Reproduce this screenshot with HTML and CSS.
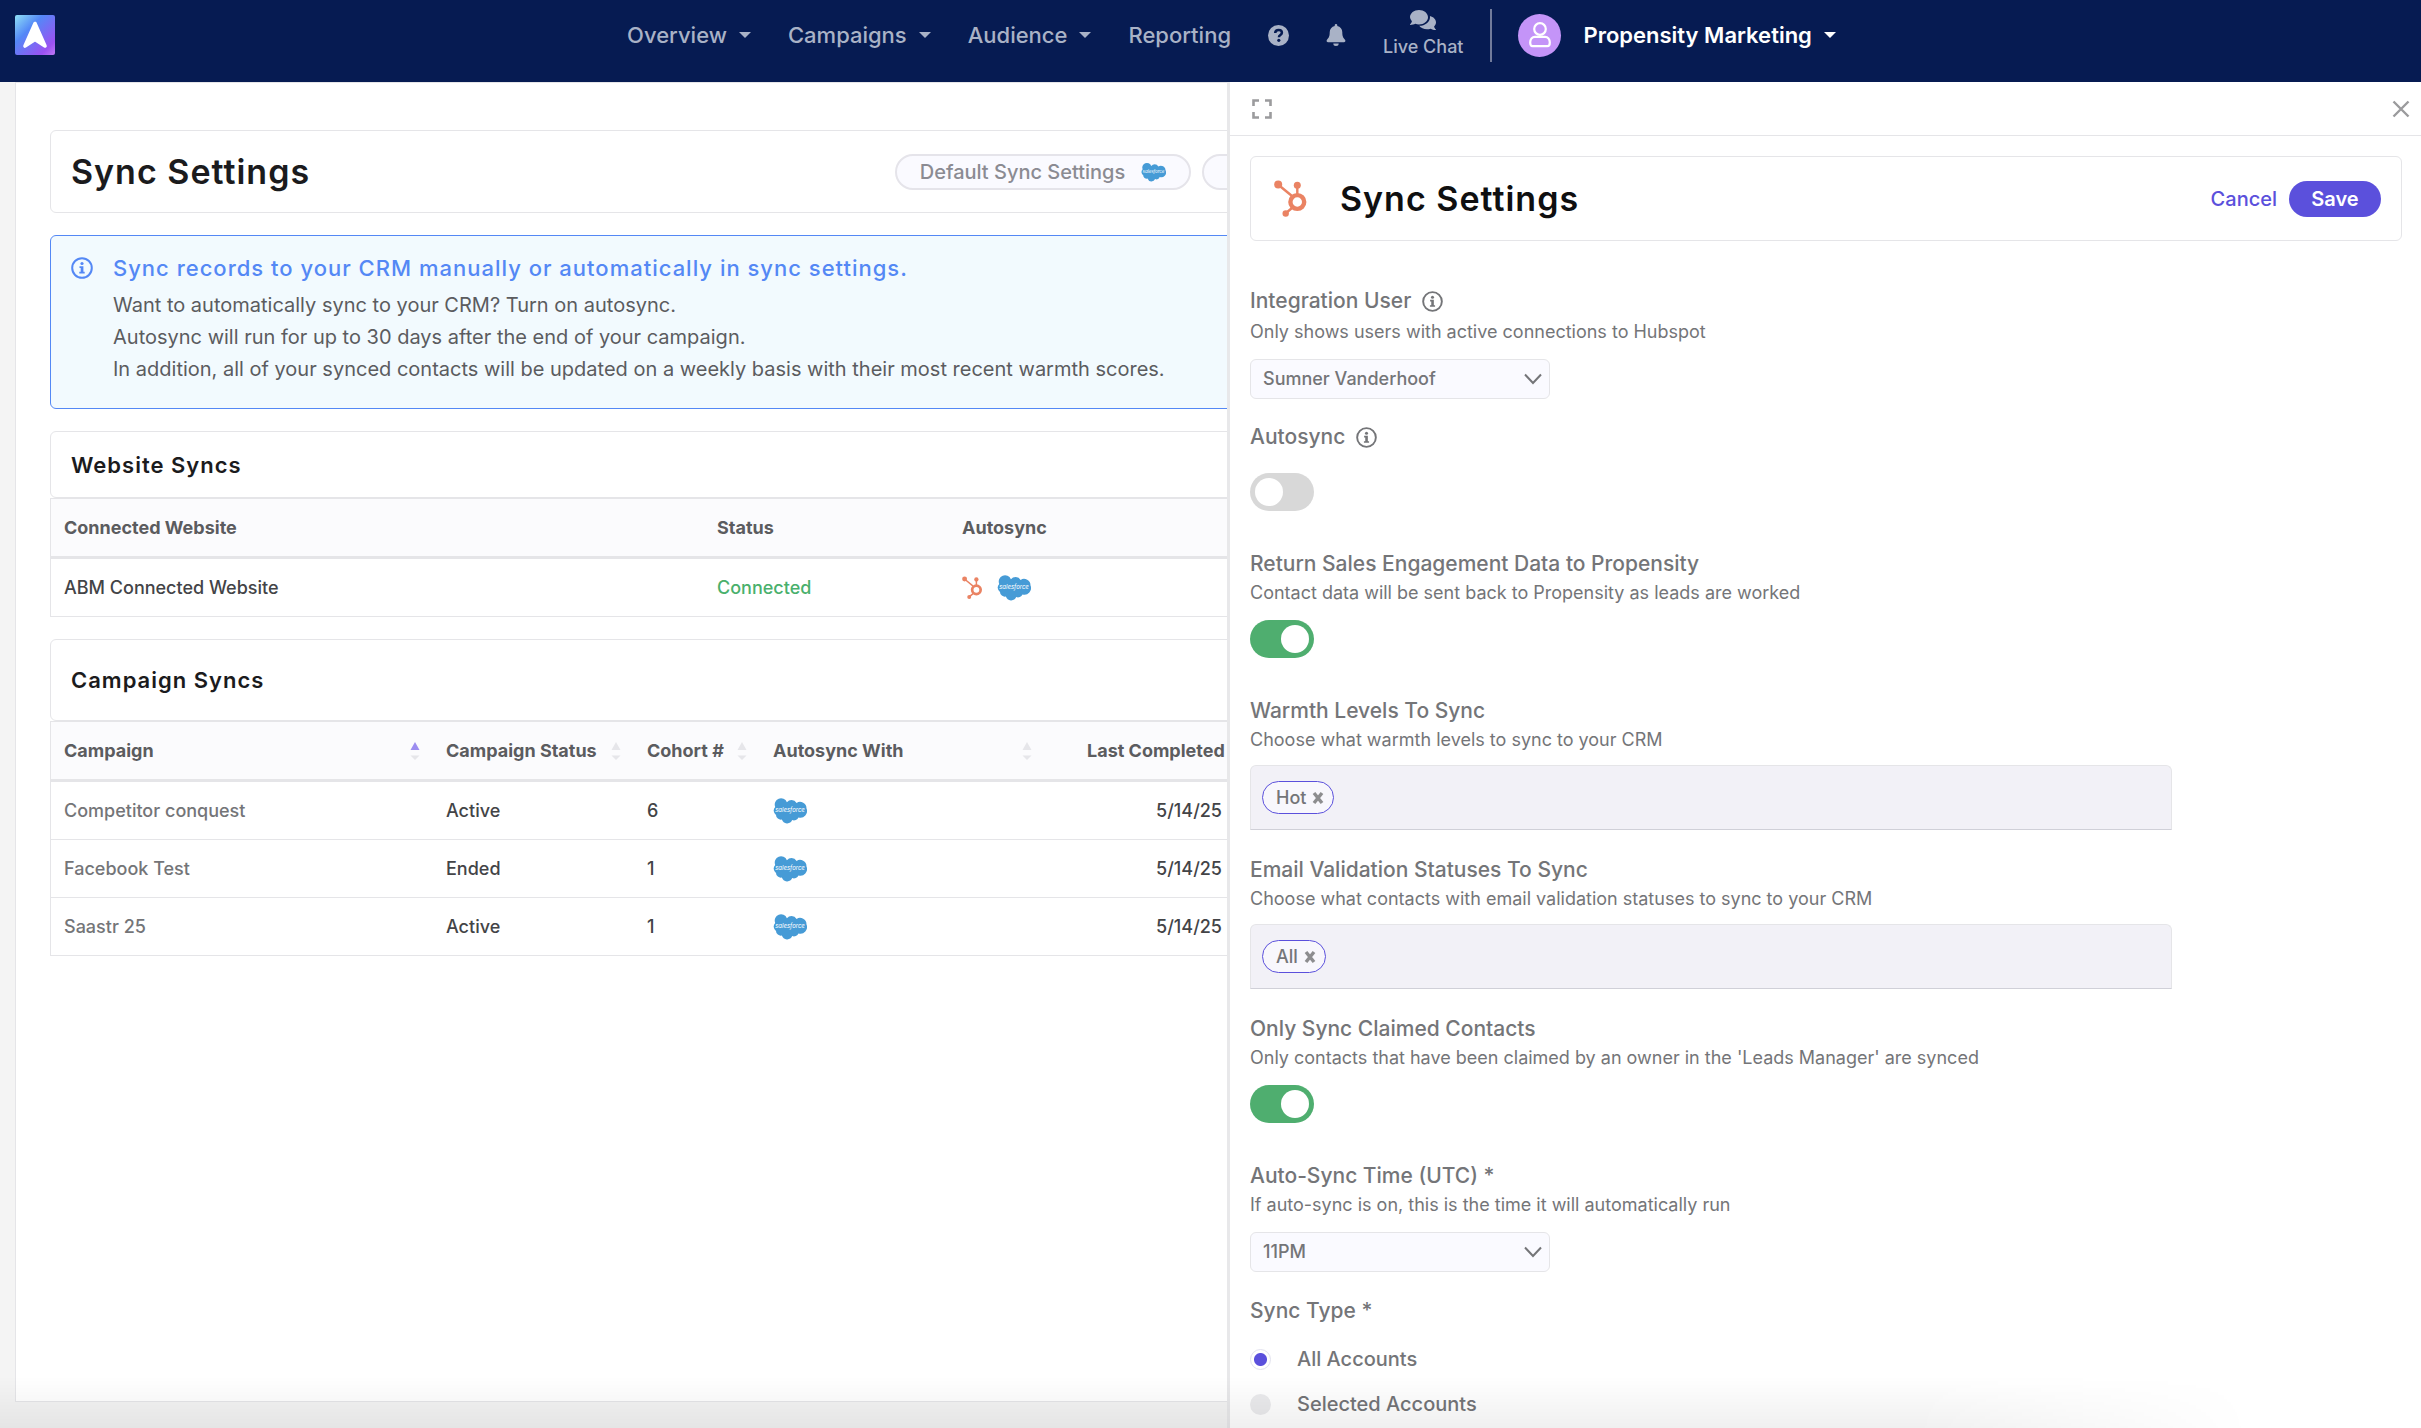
FILE: index.html
```
<!DOCTYPE html>
<html lang="en">
<head>
<meta charset="utf-8">
<title>Sync Settings</title>
<link rel="stylesheet" href="styles.css">
</head>
<body>
<svg class="sprite" aria-hidden="true">
  <symbol id="salesforce" viewBox="0 0 34 27">
    <path fill="#469bd6" d="M13.9 3.2A6.2 6.2 0 0 1 18.600 1a6 6 0 0 1 5 2.900 6.500 6.500 0 0 1 9.900 5.600 6.600 6.600 0 0 1-8 8.900 5 5 0 0 1-6.300 2.700 5.500 5.500 0 0 1-10.300-.600 4.800 4.800 0 0 1-5.900-4.600A5.200 5.200 0 0 1 2.200 7.900 6.300 6.300 0 0 1 13.900 3.200z" transform="translate(0 2)"/>
    <text x="17" y="15" text-anchor="middle" fill="#fff" class="cloud-word">salesforce</text>
  </symbol>
  <symbol id="hubspot" viewBox="0 0 34 38">
    <g fill="none" stroke="#ea8363" stroke-width="2.400">
      <path d="M4 4.500l14 11.500M23.300 6v9M18 28l-6 5"/>
      <circle cx="23.300" cy="22" r="6.900" stroke-width="4.400"/>
    </g>
    <g fill="#ea8363"><circle cx="4.200" cy="4.500" r="4"/><circle cx="23.300" cy="5.200" r="3.500"/><circle cx="11.700" cy="33.500" r="3.200"/></g>
  </symbol>
  <symbol id="info" viewBox="0 0 22 22">
    <circle cx="11" cy="11" r="9.800" fill="none" stroke="currentColor" stroke-width="2"/>
    <circle cx="11" cy="6.500" r="1.600" fill="currentColor"/>
    <path d="M8.500 9.200h3.900v5.600h1.300v1.700H8.300v-1.700h1.400V10.900H8.500z" fill="currentColor"/>
  </symbol>
  <symbol id="chevron" viewBox="0 0 18 12">
    <path d="M1 1.500l8 8.500 8-8.500" fill="none" stroke="currentColor" stroke-width="2"/>
  </symbol>
  <symbol id="sort" viewBox="0 0 10 20">
    <path class="sort-up" d="M5 1l4.500 8h-9z"/><path class="sort-down" d="M5 19L.5 14.500h9z"/>
  </symbol>
  <symbol id="remove" viewBox="0 0 12 14">
    <path d="M2 2l8 10M10 2L2 12" fill="none" stroke="currentColor" stroke-width="3.400"/>
  </symbol>
</svg>

<header class="topbar">
  <a class="logo" href="#" aria-label="Propensity home">
    <svg viewBox="0 0 40 40" width="40" height="40">
      <defs><linearGradient id="logo-fill" x1="0" y1="0" x2="1" y2="1">
        <stop offset="0" stop-color="#8fe0f5"/><stop offset=".35" stop-color="#5488f7"/><stop offset=".82" stop-color="#9a52f2"/><stop offset="1" stop-color="#c07af5"/>
      </linearGradient></defs>
      <rect width="40" height="40" rx="2" fill="url(#logo-fill)"/>
      <path d="M20 8.500L30 31l-10-6.500L10 31z" fill="#fff" stroke="#fff" stroke-width="3.600" stroke-linejoin="round"/>
    </svg>
  </a>
  <nav class="nav">
    <button class="nav-item" type="button">Overview<span class="caret"></span></button>
    <button class="nav-item" type="button">Campaigns<span class="caret"></span></button>
    <button class="nav-item" type="button">Audience<span class="caret"></span></button>
    <a class="nav-item" href="#">Reporting</a>
    <a class="nav-item" href="#" aria-label="Help">
      <svg width="21" height="21" viewBox="0 0 21 21"><circle cx="10.500" cy="10.500" r="10.500" fill="currentColor"/><path d="M7.200 8c.1-1.900 1.500-2.900 3.400-2.900s3.300 1 3.300 2.700c0 2.300-3 2.300-3 4.400" fill="none" stroke="#061b52" stroke-width="2.500"/><circle cx="10.800" cy="15.300" r="1.600" fill="#061b52"/></svg>
    </a>
    <a class="nav-item" href="#" aria-label="Notifications">
      <svg width="20" height="22" viewBox="0 0 20 22"><path d="M10 0c.8 0 1.300.6 1.300 1.400v.7c3 .6 5 3 5 6.200 0 4.200 1 5.600 2.700 7.400.9 1 .2 2.600-1.100 2.600H2.100c-1.300 0-2-1.600-1.100-2.600 1.700-1.800 2.700-3.200 2.700-7.400 0-3.200 2-5.600 5-6.200v-.7C8.700.6 9.200 0 10 0zM7.300 19.500h5.400a2.700 2.500 0 0 1-5.400 0z" fill="currentColor"/></svg>
    </a>
    <a class="nav-item chat" href="#">
      <svg width="26" height="20" viewBox="0 0 26 20"><path d="M9 0c5 0 9 3.200 9 7.200s-4 7.200-9 7.200c-1.300 0-2.600-.2-3.700-.6C4 14.500 2.200 15 .3 15c-.3 0-.4-.4-.2-.6.700-.700 1.500-1.900 1.800-3.100A6.500 6.500 0 0 1 0 7.200C0 3.200 4 0 9 0z" fill="currentColor"/><path d="M19.900 6.100C23.500 7 26 9.500 26 12.300c0 1.600-.7 3-1.900 4.100.3 1.200 1.100 2.300 1.800 3 .2.200.1.600-.2.600-1.900 0-3.700-.6-5-1.300-1.100.4-2.400.6-3.700.6-3.300 0-6.200-1.400-7.800-3.500C15.300 15.700 20 12 20 7.200c0-.4 0-.7-.1-1.100z" fill="currentColor"/></svg>
      <span>Live Chat</span>
    </a>
    <button class="account" type="button">
      <span class="avatar">
        <svg width="22" height="26" viewBox="0 0 22 26" fill="none" stroke="#fff" stroke-width="2.200"><circle cx="11" cy="7" r="5.800"/><path d="M6 14.800h10c2.800 0 4.800 2.600 4.800 5.800 0 2-.8 3.600-2.300 3.600h-15c-1.500 0-2.300-1.600-2.300-3.600 0-3.200 2-5.800 4.800-5.800z"/></svg>
      </span>
      Propensity Marketing<span class="caret"></span>
    </button>
  </nav>
</header>

<div class="layout">
  <main class="workspace">
    <div class="page">
      <section class="card page-head">
        <h1>Sync Settings</h1>
        <div class="pills">
          <button class="pill" type="button">Default Sync Settings <svg width="25" height="20"><use href="#salesforce"/></svg></button>
          <button class="pill" type="button" aria-label="Default Hubspot settings"><svg width="20" height="20"><use href="#hubspot"/></svg></button>
        </div>
      </section>

      <section class="notice">
        <svg width="22" height="22"><use href="#info"/></svg>
        <div>
          <h2>Sync records to your CRM manually or automatically in sync settings.</h2>
          <p>Want to automatically sync to your CRM? Turn on autosync.</p>
          <p>Autosync will run for up to 30 days after the end of your campaign.</p>
          <p>In addition, all of your synced contacts will be updated on a weekly basis with their most recent warmth scores.</p>
        </div>
      </section>

      <section class="block">
        <h2 class="card block-title">Website Syncs</h2>
        <table class="grid">
          <colgroup><col class="w-site"><col class="w-state"><col></colgroup>
          <thead><tr><th>Connected Website</th><th>Status</th><th>Autosync</th></tr></thead>
          <tbody><tr><td>ABM Connected Website</td><td class="ok">Connected</td><td><span class="marks"><svg width="21" height="24"><use href="#hubspot"/></svg><svg width="34" height="27"><use href="#salesforce"/></svg></span></td></tr></tbody>
        </table>
      </section>

      <section class="block">
        <h2 class="card block-title tall">Campaign Syncs</h2>
        <table class="grid">
          <colgroup><col class="w-campaign"><col class="w-status"><col class="w-cohort"><col class="w-with"><col class="w-last"><col></colgroup>
          <thead><tr>
            <th><span class="sortable">Campaign<svg class="asc" width="10" height="20"><use href="#sort"/></svg></span></th>
            <th><span class="sortable">Campaign Status<svg width="10" height="20"><use href="#sort"/></svg></span></th>
            <th><span class="sortable">Cohort #<svg width="10" height="20"><use href="#sort"/></svg></span></th>
            <th><span class="sortable">Autosync With<svg width="10" height="20"><use href="#sort"/></svg></span></th>
            <th class="last">Last Completed</th><th></th>
          </tr></thead>
          <tbody>
            <tr><td><a href="#">Competitor conquest</a></td><td>Active</td><td>6</td><td><span class="marks"><svg width="34" height="27"><use href="#salesforce"/></svg></span></td><td class="date">5/14/25</td><td></td></tr>
            <tr><td><a href="#">Facebook Test</a></td><td>Ended</td><td>1</td><td><span class="marks"><svg width="34" height="27"><use href="#salesforce"/></svg></span></td><td class="date">5/14/25</td><td></td></tr>
            <tr><td><a href="#">Saastr 25</a></td><td>Active</td><td>1</td><td><span class="marks"><svg width="34" height="27"><use href="#salesforce"/></svg></span></td><td class="date">5/14/25</td><td></td></tr>
          </tbody>
        </table>
      </section>
    </div>
  </main>

  <aside class="drawer">
    <div class="drawer-bar">
      <button class="icon-button" type="button" aria-label="Expand"><svg width="20" height="20" viewBox="0 0 20 20" fill="none" stroke="currentColor" stroke-width="2.600"><path d="M1.500 7V1.500H7M13 1.500h5.500V7M18.500 13v5.500H13M7 18.500H1.500V13"/></svg></button>
      <button class="icon-button" type="button" aria-label="Close"><svg width="18" height="18" viewBox="0 0 18 18" fill="none" stroke="currentColor" stroke-width="2.400"><path d="M1.500 1.500l15 15M16.500 1.500l-15 15"/></svg></button>
    </div>
    <form class="drawer-body">
      <div class="card drawer-head">
        <svg width="34" height="38"><use href="#hubspot"/></svg>
        <h2>Sync Settings</h2>
        <button class="link-button" type="button">Cancel</button>
        <button class="save" type="submit">Save</button>
      </div>

      <div class="field">
        <div class="label-row"><label for="user">Integration User</label><svg width="21" height="21"><use href="#info"/></svg></div>
        <p class="hint">Only shows users with active connections to Hubspot</p>
        <div class="select"><select id="user"><option>Sumner Vanderhoof</option></select><svg width="18" height="12"><use href="#chevron"/></svg></div>
      </div>

      <div class="field field-switch field-bare">
        <div class="label-row"><label for="autosync">Autosync</label><svg width="21" height="21"><use href="#info"/></svg></div>
        <input class="switch" type="checkbox" id="autosync">
      </div>

      <div class="field field-switch">
        <label for="engagement">Return Sales Engagement Data to Propensity</label>
        <p class="hint">Contact data will be sent back to Propensity as leads are worked</p>
        <input class="switch" type="checkbox" id="engagement" checked>
      </div>

      <div class="field field-tags">
        <label for="warmth">Warmth Levels To Sync</label>
        <p class="hint">Choose what warmth levels to sync to your CRM</p>
        <div class="tags"><span class="tag">Hot<button type="button" aria-label="Remove Hot"><svg width="12" height="14"><use href="#remove"/></svg></button></span><input type="text" id="warmth"></div>
      </div>

      <div class="field field-tags">
        <label for="validation">Email Validation Statuses To Sync</label>
        <p class="hint">Choose what contacts with email validation statuses to sync to your CRM</p>
        <div class="tags"><span class="tag">All<button type="button" aria-label="Remove All"><svg width="12" height="14"><use href="#remove"/></svg></button></span><input type="text" id="validation"></div>
      </div>

      <div class="field field-switch">
        <label for="claimed">Only Sync Claimed Contacts</label>
        <p class="hint">Only contacts that have been claimed by an owner in the 'Leads Manager' are synced</p>
        <input class="switch" type="checkbox" id="claimed" checked>
      </div>

      <div class="field">
        <label for="time">Auto-Sync Time (UTC) *</label>
        <p class="hint">If auto-sync is on, this is the time it will automatically run</p>
        <div class="select"><select id="time"><option>11PM</option></select><svg width="18" height="12"><use href="#chevron"/></svg></div>
      </div>

      <fieldset class="choices">
        <legend>Sync Type *</legend>
        <label class="choice"><input type="radio" name="type" checked>All Accounts</label>
        <label class="choice"><input type="radio" name="type">Selected Accounts</label>
      </fieldset>
    </form>
  </aside>
</div>
</body>
</html>
```
FILE: styles.css
```
:root {
  --navy: #061b52;
  --nav-text: #a9b2c6;
  --line: #e5e5e8;
  --ink: #1b1b1d;
  --text: #5b5c5f;
  --muted: #747578;
  --accent: #5b50dc;
  --green: #4fae6f;
}
* { box-sizing: border-box; }
html, body { height: 100%; }
body {
  margin: 0;
  display: flex;
  flex-direction: column;
  background: #f4f4f4;
  color: var(--text);
  font: 18px/26px Inter, "Liberation Sans", sans-serif;
  overflow: hidden;
}
/* soft shade along the bottom edge of the window */
body::after {
  content: "";
  position: fixed;
  inset: auto 7% 0 0;
  height: 52px;
  background: linear-gradient(rgba(0, 0, 0, 0), rgba(0, 0, 0, .06));
  mask-image: linear-gradient(to right, #000 85%, transparent);
  pointer-events: none;
}
h1, h2, p, fieldset { margin: 0; padding: 0; border: 0; }
button, input, select { font: inherit; color: inherit; margin: 0; }
button { background: none; border: 0; padding: 0; }
a { color: inherit; text-decoration: none; }
svg { display: block; flex: none; }
.sprite { display: none; }
.cloud-word { font: italic 6px Inter, sans-serif; }

/* top bar */
.topbar {
  flex: none;
  display: flex;
  align-items: center;
  height: 82px;
  padding: 0 13px 12px 15px;
  background: var(--navy);
}
.nav { display: flex; align-items: center; gap: 37px; margin: 0 auto; }
.nav-item { display: flex; align-items: center; gap: 12px; color: var(--nav-text); font-size: 22px; font-weight: 500; }
.caret { border: 6px solid transparent; border-top-color: currentColor; border-bottom: 0; }
.chat { flex-direction: column; gap: 4px; font-size: 18px; }
.account {
  display: flex;
  align-items: center;
  gap: 12px;
  height: 53px;
  margin-left: -10px;
  padding-left: 26px;
  border-left: 2px solid #717b9b;
  color: #fff;
  font-size: 22px;
  font-weight: 600;
}
.avatar {
  display: grid;
  place-items: center;
  width: 43px;
  height: 43px;
  margin-right: 10px;
  border-radius: 50%;
  background: #c494f8;
}

/* two panes under the bar */
.layout { flex: 1; min-height: 0; display: grid; grid-template-columns: 1227fr 1194fr; }
.workspace { display: flex; min-width: 0; padding: 0 0 26px 15px; overflow: hidden; }
.page {
  flex: 0 0 calc(100% + 327px);
  padding: 47px 34px 0;
  background: #fff;
  border: 1px solid var(--line);
}
.card { background: #fff; border: 1px solid var(--line); border-radius: 6px; }
h1, .drawer-head h2 { color: var(--ink); font-size: 34px; font-weight: 600; line-height: 40px; letter-spacing: 1px; }
.page-head { display: flex; align-items: center; justify-content: space-between; height: 83px; padding: 0 20px; }
.pills { display: flex; gap: 11px; }
.pill {
  display: flex;
  align-items: center;
  justify-content: center;
  gap: 16px;
  width: 296px;
  height: 36px;
  border: 2px solid #e5e4ea;
  border-radius: 18px;
  background: #fafaff;
  color: #8b8b92;
  font-size: 20px;
  font-weight: 500;
}
.notice {
  display: flex;
  gap: 20px;
  margin: 22px 0;
  padding: 16px 20px 23px;
  border: 1px solid #5488f5;
  border-radius: 6px;
  background: #f2fafe;
  font-size: 20px;
  line-height: 32px;
}
.notice svg { margin-top: 5px; color: #5488f5; }
.notice h2 { margin-bottom: 5px; color: #5488f5; font-size: 22px; font-weight: 500; line-height: 32px; letter-spacing: 1px; }
.block { margin-bottom: 22px; }
.block-title { padding: 20px 20px 19px; color: var(--ink); font-size: 22px; font-weight: 600; line-height: 26px; letter-spacing: 1px; }
.block-title.tall { padding: 27px 20px; }
.grid { width: 100%; table-layout: fixed; border-spacing: 0; border-left: 1px solid var(--line); }
.grid th, .grid td { height: 58px; padding: 0 13px; text-align: left; white-space: nowrap; }
.grid th { height: 61px; background: #fbfbfd; border-top: 1px solid var(--line); border-bottom: 3px solid var(--line); font-weight: 700; }
.grid td { border-bottom: 1px solid var(--line); color: #434447; font-weight: 500; }
.grid td a { color: var(--muted); }
.grid .ok { color: #49b06c; }
.grid .last { padding-left: 42px; }
.grid .date { text-align: right; }
.sortable { display: flex; align-items: center; justify-content: space-between; }
.sortable svg, .sort-down { fill: #e6e6ea; }
.sortable .asc { fill: #9c8df0; }
.marks { display: flex; align-items: center; gap: 14px; }
.w-site { width: 653px; }
.w-state { width: 245px; }
.w-campaign { width: 382px; }
.w-status { width: 201px; }
.w-cohort { width: 126px; }
.w-with { width: 285px; }
.w-last { width: 190px; }

/* drawer */
.drawer { min-width: 0; background: #fff; border-left: 3px solid #e8e8ea; overflow: hidden; }
.drawer-bar { display: flex; align-items: center; justify-content: space-between; height: 54px; padding: 0 11px 0 22px; border-bottom: 1px solid var(--line); }
.icon-button { color: #9b9b9d; }
.drawer-body { padding: 20px 19px 0 20px; }
.drawer-head { display: flex; align-items: center; height: 85px; margin-bottom: 45px; padding: 0 20px 0 23px; }
.drawer-head h2 { margin: 0 auto 0 32px; color: #0f0f10; }
.link-button { color: var(--accent); font-size: 20px; font-weight: 500; }
.save { width: 92px; height: 36px; margin-left: 12px; border-radius: 18px; background: var(--accent); color: #fff; font-size: 20px; font-weight: 600; }

.field { display: flex; flex-direction: column; align-items: flex-start; margin-bottom: 23px; }
.field > label, .label-row label, legend { color: var(--muted); font-size: 21px; font-weight: 500; line-height: 26px; }
.label-row { display: flex; align-items: center; gap: 11px; height: 30px; color: var(--muted); }
.hint { margin: 3px 0 14px; color: var(--muted); }
.field-tags { margin-bottom: 27px; }
.field-tags .hint { margin-bottom: 12px; }
.field-switch { margin-bottom: 40px; }
.field-bare .switch { margin-top: 21px; }

.select { display: flex; align-items: center; width: 300px; height: 40px; padding-right: 7px; border: 1px solid var(--line); border-radius: 6px; background: #fafaff; color: var(--muted); }
.select select { flex: 1; height: 38px; margin-right: -18px; padding: 0 26px 0 12px; appearance: none; border: 0; background: none; font-weight: 500; }
.select svg { pointer-events: none; }

.switch { display: block; width: 64px; height: 38px; padding: 5px; appearance: none; border-radius: 19px; background: #d8d8d8; }
.switch::before { content: ""; display: block; width: 28px; height: 28px; border-radius: 50%; background: #fff; }
.switch:checked { background: var(--green); }
.switch:checked::before { margin-left: auto; }

.tags { display: flex; align-items: center; gap: 8px; width: 80%; height: 65px; padding: 0 11px; border: 1px solid var(--line); border-bottom-color: #d0d0d8; border-radius: 6px 6px 0 0; background: #f2f1f7; }
.tag { display: flex; align-items: center; gap: 6px; height: 33px; padding: 0 9px 0 13px; border: 1px solid var(--accent); border-radius: 17px; background: #f8f7fc; color: var(--muted); font-weight: 500; }
.tag button { color: #8d8d8f; }
.tags input { flex: 1; min-width: 0; border: 0; background: none; outline: 0; }

.choices { display: flex; flex-direction: column; gap: 19px; padding-top: 3px; }
legend { padding: 3px 0 19px; }
.choice { display: flex; align-items: center; gap: 26px; color: var(--muted); font-size: 20px; font-weight: 500; }
.choice input { width: 21px; height: 21px; appearance: none; border-radius: 50%; background: #ebebed; }
.choice input:checked { border: 1px solid #e2e2ee; background: radial-gradient(circle, var(--accent) 6px, #fff 7px); }
```
